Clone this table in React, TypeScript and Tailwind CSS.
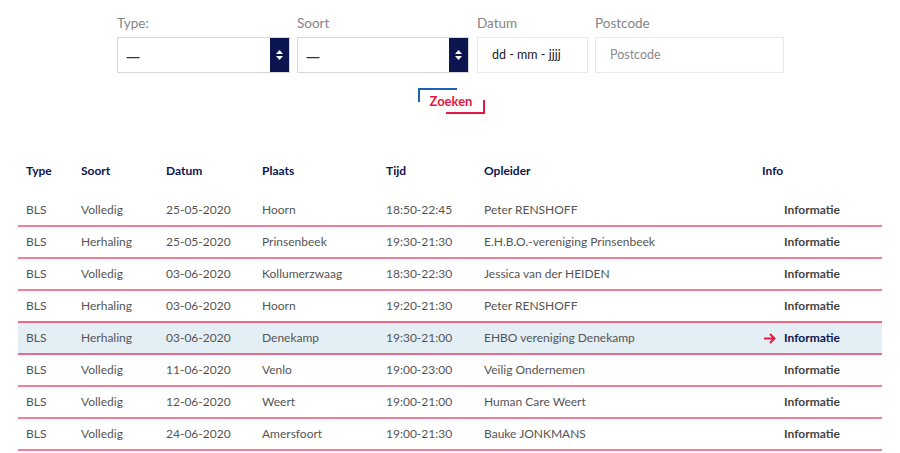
import React from "react";

const rows = [
  ["BLS", "Volledig", "25-05-2020", "Hoorn", "18:50-22:45", "Peter RENSHOFF"],
  ["BLS", "Herhaling", "25-05-2020", "Prinsenbeek", "19:30-21:30", "E.H.B.O.-vereniging Prinsenbeek"],
  ["BLS", "Volledig", "03-06-2020", "Kollumerzwaag", "18:30-22:30", "Jessica van der HEIDEN"],
  ["BLS", "Herhaling", "03-06-2020", "Hoorn", "19:20-21:30", "Peter RENSHOFF"],
  ["BLS", "Herhaling", "03-06-2020", "Denekamp", "19:30-21:00", "EHBO vereniging Denekamp"],
  ["BLS", "Volledig", "11-06-2020", "Venlo", "19:00-23:00", "Veilig Ondernemen"],
  ["BLS", "Volledig", "12-06-2020", "Weert", "19:00-21:00", "Human Care Weert"],
  ["BLS", "Volledig", "24-06-2020", "Amersfoort", "19:00-21:30", "Bauke JONKMANS"],
];

const widths = ["w-[55px]", "w-[85px]", "w-[96px]", "w-[124px]", "w-[98px]", "w-[278px]", "w-[128px]"];
const headers = ["Type", "Soort", "Datum", "Plaats", "Tijd", "Opleider", "Info"];

function Select({ width }: { width: string }) {
  return (
    <div className={`flex h-[36px] ${width} border border-[#d6d6d6] bg-white`}>
      <div className="flex flex-1 items-center pl-[8px] pt-[2px] font-['Noto_Sans',sans-serif] text-[14px] text-[#333]">—</div>
      <div className="flex w-[19px] flex-col items-center justify-center gap-[2px] bg-[#0b1550]">
        <svg width="7" height="4" viewBox="0 0 7 4"><path d="M0 4 L3.5 0 L7 4 Z" fill="white" /></svg>
        <svg width="7" height="4" viewBox="0 0 7 4"><path d="M0 0 L3.5 4 L7 0 Z" fill="white" /></svg>
      </div>
    </div>
  );
}

export default function App() {
  return (
    <div className="w-[900px] h-[453px] overflow-hidden bg-white" style={{ fontFamily: "Lato, 'Noto Sans', sans-serif" }}>
      <div className="flex gap-[7px] pl-[117px] pt-[13px]">
        <div className="flex flex-col">
          <label className="h-[24px] text-[13.5px] leading-[20px] text-[#858585]">Type:</label>
          <Select width="w-[173px]" />
        </div>
        <div className="flex flex-col">
          <label className="h-[24px] text-[13.5px] leading-[20px] text-[#858585]">Soort</label>
          <Select width="w-[172px]" />
        </div>
        <div className="ml-[1px] flex flex-col">
          <label className="h-[24px] text-[13.5px] leading-[20px] text-[#858585]">Datum</label>
          <div className="flex h-[36px] w-[111px] items-center border border-[#ece8e0] bg-white pl-[14px] text-[12.5px] text-[#222]">
            dd - mm - jjjj
          </div>
        </div>
        <div className="flex flex-col">
          <label className="h-[24px] text-[13.5px] leading-[20px] text-[#858585]">Postcode</label>
          <div className="flex h-[36px] w-[189px] items-center border border-[#ece8e0] bg-white pl-[14px] text-[12.5px] text-[#8a8a8a]">
            Postcode
          </div>
        </div>
      </div>

      <div className="mt-[16px] flex justify-center">
        <div className="relative ml-[2px] h-[25px] w-[67px]">
          <div className="absolute left-0 top-[-1px] h-[14px] w-[39px] border-l-2 border-t-2 border-[#1d62ad]" />
          <div className="absolute bottom-0 right-0 h-[14px] w-[39px] border-b-2 border-r-2 border-[#e8173f]" />
          <div className="flex h-full items-center justify-center pt-[1px] text-[13px] font-bold text-[#e8173f]">Zoeken</div>
        </div>
      </div>

      <div className="ml-[18px] mt-[41px] w-[864px] text-[12px]">
        <div className="flex h-[40px] items-center pb-[8px]">
          {headers.map((h, i) => (
            <div key={h} className={`${widths[i]} px-[8px] font-bold text-[#0b1550]`}>{h}</div>
          ))}
        </div>
        {rows.map((r, ri) => {
          const active = ri === 4;
          return (
            <div
              key={ri}
              className={
                active
                  ? "mt-[-2px] flex h-[34px] items-center border-y-2 border-y-[#f06888] bg-[#e4eef5]"
                  : "flex h-[32px] items-center border-b-2 border-b-[#f27d99]"
              }
            >
              {r.map((c, ci) => (
                <div key={ci} className={`${widths[ci]} px-[8px] text-[#555]`}>{c}</div>
              ))}
              <div className={`${widths[6]} px-[8px]`}>
                <div className="flex items-center gap-[8px]">
                  <span className="flex w-[14px] justify-center">
                    {active && (
                      <svg width="13" height="11" viewBox="0 0 13 11">
                        <path d="M1 5.5 H11.5 M7 1 L11.5 5.5 L7 10" stroke="#e8173f" strokeWidth="2" fill="none" />
                      </svg>
                    )}
                  </span>
                  <span className={`font-bold ${active ? "text-[#0b1550]" : "text-[#444]"}`}>Informatie</span>
                </div>
              </div>
            </div>
          );
        })}
      </div>
    </div>
  );
}
